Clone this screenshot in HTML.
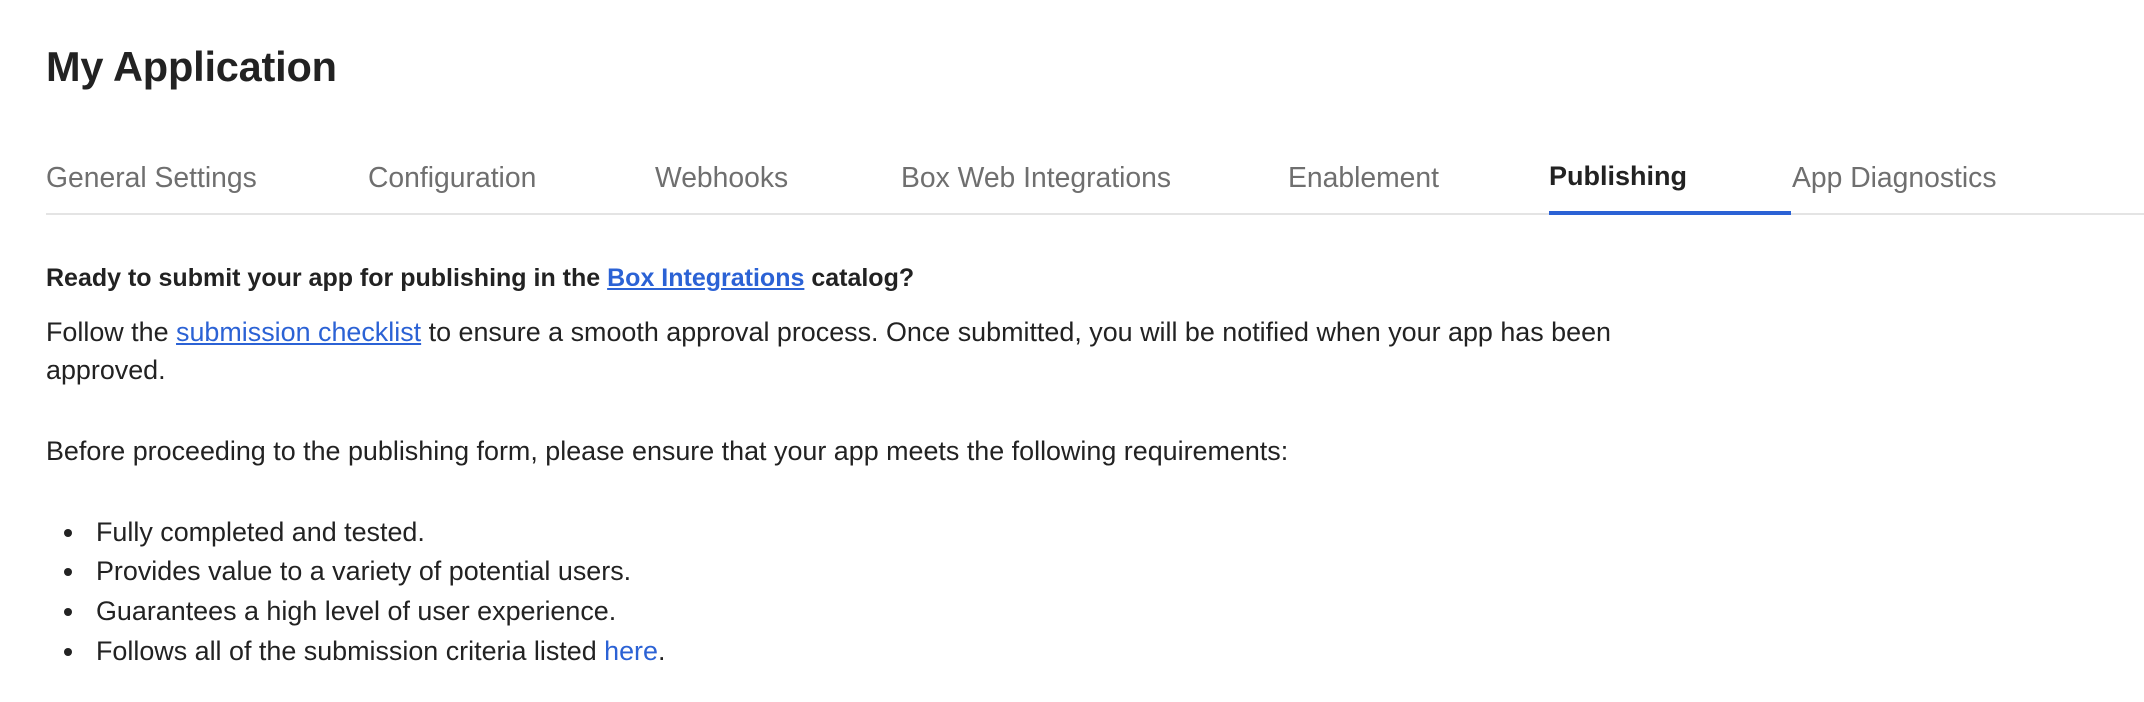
<!DOCTYPE html>
<html><head><meta charset="utf-8"><style>
body{margin:0;width:2144px;height:702px;background:#fff;font-family:"Liberation Sans",sans-serif;color:#222;position:relative;overflow:hidden}
h1{position:absolute;left:46px;top:43px;margin:0;font-size:41.5px;font-weight:bold;color:#222;letter-spacing:-0.2px;white-space:nowrap}
.tab{position:absolute;top:161px;font-size:28.3px;color:#6f6f6f;white-space:nowrap}
.line{position:absolute;left:46px;right:0;top:213px;height:2px;background:#e4e4e4}
.ul{position:absolute;left:1549px;width:242px;top:211px;height:4px;background:#2b62d5}
.p{position:absolute;left:46px;font-size:26.9px;white-space:nowrap}
a{color:#2b62d5}
.b{position:absolute;left:96px;font-size:26.9px;white-space:nowrap}
.dot{position:absolute;left:64px;width:8px;height:8px;border-radius:50%;background:#222}
</style></head><body>
<h1>My Application</h1>
<div class="tab" style="left:46px">General Settings</div>
<div class="tab" style="left:368px">Configuration</div>
<div class="tab" style="left:655px">Webhooks</div>
<div class="tab" style="left:901px">Box Web Integrations</div>
<div class="tab" style="left:1288px">Enablement</div>
<div class="tab" style="left:1549px;color:#222;font-weight:bold;font-size:27px">Publishing</div>
<div class="tab" style="left:1792px">App Diagnostics</div>
<div class="line"></div><div class="ul"></div>
<div class="p" style="top:264px;font-weight:bold;font-size:25px">Ready to submit your app for publishing in the <a href="#">Box Integrations</a> catalog?</div>
<div class="p" style="top:317px">Follow the <a href="#">submission checklist</a> to ensure a smooth approval process. Once submitted, you will be notified when your app has been</div>
<div class="p" style="top:355px">approved.</div>
<div class="p" style="top:436px">Before proceeding to the publishing form, please ensure that your app meets the following requirements:</div>
<div class="dot" style="top:529px"></div><div class="b" style="top:517px">Fully completed and tested.</div>
<div class="dot" style="top:568px"></div><div class="b" style="top:556px">Provides value to a variety of potential users.</div>
<div class="dot" style="top:608px"></div><div class="b" style="top:596px">Guarantees a high level of user experience.</div>
<div class="dot" style="top:648px"></div><div class="b" style="top:636px">Follows all of the submission criteria listed <a href="#" style="text-decoration:none">here</a>.</div>
</body></html>
